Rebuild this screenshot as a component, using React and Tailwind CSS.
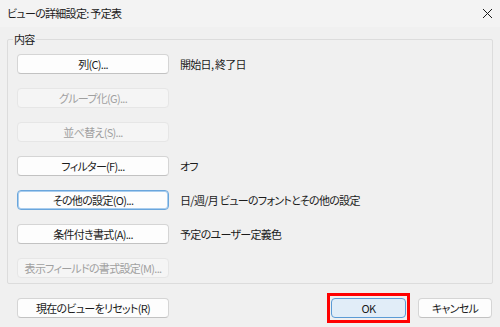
const rows = [
  { label: '列(C)...', text: '開始日, 終了日' },
  { label: 'グループ化(G)...', disabled: true },
  { label: '並べ替え(S)...', disabled: true },
  { label: 'フィルター(F)...', text: 'オフ' },
  { label: 'その他の設定(O)...', text: '日/週/月 ビューのフォントとその他の設定', focused: true },
  { label: '条件付き書式(A)...', text: '予定のユーザー定義色' },
  { label: '表示フィールドの書式設定(M)...', disabled: true },
]

function DlgButton({ children, disabled, focused, className = '' }) {
  let style = 'bg-[#fdfdfd] border-[#d5d5d5] border-b-[#c2c2c2] text-[#1b1b1b]'
  if (disabled) style = 'bg-[#f5f5f5] border-[#e6e6e6] text-[#a0a0a0]'
  if (focused) style = 'bg-[#fdfdfd] border-[#6aa6dc] text-[#1b1b1b] ring-1 ring-inset ring-[#a9cdee]'
  return (
    <div className={`h-[20px] flex items-center justify-center whitespace-nowrap rounded-[4px] border text-[11px] leading-none ${style} ${className}`}>
      {children}
    </div>
  )
}

export default function App() {
  return (
    <div
      className="w-[500px] h-[327px] bg-[#f0f0f0] text-[#1b1b1b] flex flex-col tracking-[-0.7px] [font-feature-settings:'palt']"
      style={{ fontFamily: '"Noto Sans CJK JP", "Noto Sans", sans-serif' }}
    >
      <div className="h-[27px] bg-[#f3f3f3] flex items-center justify-between pl-[7px] pr-[6px] text-[11px]">
        <span>ビューの詳細設定: 予定表</span>
        <svg width="11" height="11" viewBox="0 0 11 11" className="mr-[1px]">
          <path d="M1 1 L10 10 M10 1 L1 10" stroke="#1b1b1b" strokeWidth="1" fill="none" />
        </svg>
      </div>

      <div className="px-[7px] pt-[12px]">
        <div className="relative border border-[#dcdcdc] rounded-[2px] pl-[9px] pt-[14px] pb-[5px] flex flex-col gap-[14px]">
          <span className="absolute left-[5px] -top-[9px] px-[1px] bg-[#f0f0f0] text-[11px] leading-[16px]">内容</span>
          {rows.map((r) => (
            <div key={r.label} className="flex items-center gap-[11px]">
              <DlgButton disabled={r.disabled} focused={r.focused} className="w-[152px]">
                {r.label}
              </DlgButton>
              {r.text && <span className="text-[11px] leading-none whitespace-nowrap">{r.text}</span>}
            </div>
          ))}
        </div>

        <div className="flex items-center mt-[14px] pl-[10px] pr-[1px]">
          <DlgButton className="w-[152px]">現在のビューをリセット(R)</DlgButton>
          <div className="flex-1" />
          <div className="relative">
            <span className="absolute -left-[4px] -right-[4px] -top-[5px] -bottom-[5px] border-[3px] border-[#ff0000]" />
            <DlgButton className="w-[75px] relative !bg-[#e1edf8] !border-[#5b9bd5]">OK</DlgButton>
          </div>
          <DlgButton className="w-[74px] ml-[12px]">キャンセル</DlgButton>
        </div>
      </div>
    </div>
  )
}
